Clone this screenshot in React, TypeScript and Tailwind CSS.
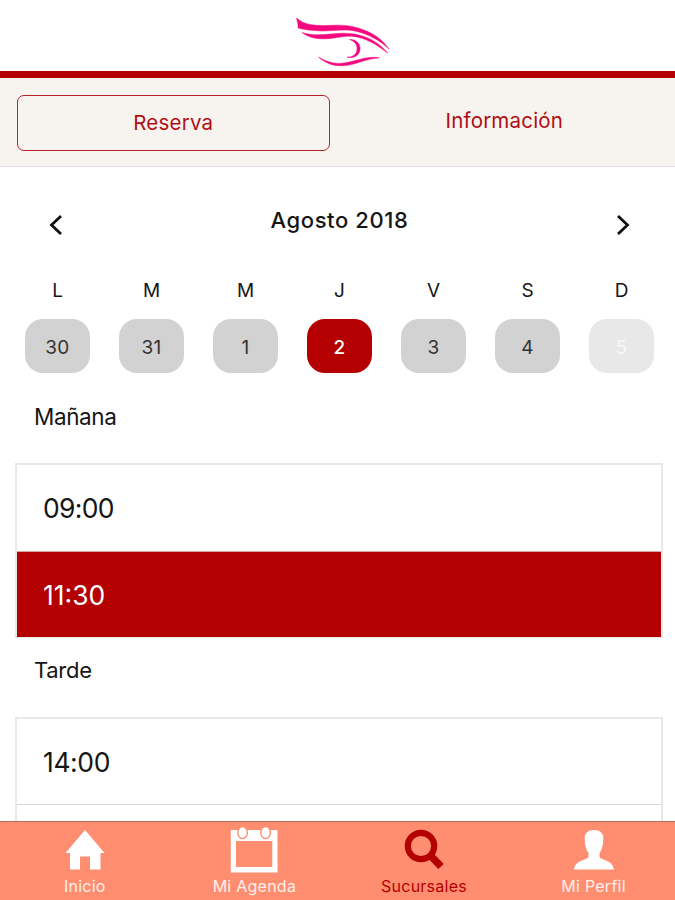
import React from 'react';
import clsx from 'clsx';

const days = [
  { letter: 'L', num: 30 },
  { letter: 'M', num: 31 },
  { letter: 'M', num: 1 },
  { letter: 'J', num: 2, selected: true },
  { letter: 'V', num: 3 },
  { letter: 'S', num: 4 },
  { letter: 'D', num: 5, disabled: true },
];

function Logo() {
  return (
    <svg className="w-[100px] h-[56px]" viewBox="292 14 100 56" fill="#f5087f" stroke="#f5087f" strokeWidth="0.5">
      <path d="M296.5 18C304 25 314 25.5 326 25.5C338 25 347 24.5 358 28C372 32 382 39 389 49C380 40.5 369 34.5 357 31.5C345 28.5 335 31 322 31C311 30.5 303 29.5 298 28C298.5 24 297 21 296.5 18Z" />
      <path d="M302 32.5C311 35.5 320 35 331 34C344 32.5 354 33 364 36.5C374 40 382 46 387.5 53C379 46 369 40 359 37.5C348 34.5 341 37.5 328 38.7C316 39.5 308 37 302 32.5Z" />
      <path d="M349.5 39.5C356 39 361 44 360 50C359 56 353 59 347 57C353 57.5 357 54 357 49C357.5 44.5 354 41 349.5 39.5Z" />
      <path d="M318.5 57C326 61.5 334 64.5 344 63C356 61.5 366 55.5 379.5 57.8C367 58.5 358 64 346 65.5C334 67 325 63 318.5 57Z" />
    </svg>
  );
}

function Chevron({ flip = false }: { flip?: boolean }) {
  return (
    <svg className="w-[14px] h-[22px]" viewBox="0 0 14 22" fill="none" stroke="#111" strokeWidth="2.8">
      <path d={flip ? 'M2 2L11.5 11L2 20' : 'M12 2L2.5 11L12 20'} />
    </svg>
  );
}

function HomeIcon() {
  return (
    <svg className="w-12 h-12" viewBox="0 0 48 48" fill="currentColor">
      <path d="M24 4L43.5 27H39.5V43.5H29V30.5H19V43.5H9V27H4.5Z" />
    </svg>
  );
}

function AgendaIcon() {
  return (
    <svg className="w-12 h-12" viewBox="0 0 48 48" fill="currentColor">
      <path fillRule="evenodd" d="M0.8 4H47.5V46.5H0.8ZM6 15V41H42.3V15Z" />
      <g stroke="#ff8e70" strokeWidth="1.4">
        <ellipse cx="12.6" cy="6.6" rx="4.8" ry="6" />
        <ellipse cx="35.6" cy="6.6" rx="4.8" ry="6" />
      </g>
    </svg>
  );
}

function SearchIcon() {
  return (
    <svg className="w-12 h-12" viewBox="0 0 48 48" fill="none" stroke="currentColor">
      <circle cx="21" cy="20" r="13.2" strokeWidth="6.2" />
      <path d="M29 28L41 40.5" strokeWidth="7.5" />
    </svg>
  );
}

function ProfileIcon() {
  return (
    <svg className="w-12 h-12" viewBox="0 0 48 48" fill="currentColor">
      <path d="M24 4C30 4 33.5 7 33.3 12.5C33.2 19 32 24 29.5 27V31C31 34.5 42.5 33.5 44 43.5H4C5.5 33.5 17 34.5 18.5 31V27C16 24 14.8 19 14.7 12.5C14.5 7 18 4 24 4Z" />
    </svg>
  );
}

const tabs = [
  { label: 'Inicio', icon: HomeIcon },
  { label: 'Mi Agenda', icon: AgendaIcon },
  { label: 'Sucursales', icon: SearchIcon, active: true },
  { label: 'Mi Perfil', icon: ProfileIcon },
];

export default function App() {
  return (
    <div className="w-[675px] h-[900px] flex flex-col overflow-hidden bg-white text-[#161616] font-['Inter',sans-serif]">
      <header className="h-[78px] shrink-0 flex justify-center pt-[14px] pl-[9px] border-b-[7px] border-[#b40000]">
        <Logo />
      </header>

      <div className="h-[89px] shrink-0 flex items-start bg-[#f7f4f0] border-b border-[#dfdfdf] pt-[17px] pl-[17px] text-[20.5px] leading-none text-[#b30d14]">
        <button className="w-[314px] h-14 border-[1.5px] border-[#b8202a] rounded-[7px] tracking-[0.2px]">Reserva</button>
        <button className="w-[347px] h-[53px] pl-1 tracking-[0.2px]">Información</button>
      </div>

      <main className="flex-1 min-h-0 overflow-hidden">
        <div className="h-[112px] flex justify-between pl-[49px] pr-[45px] pt-[47px]">
          <Chevron />
          <h1 className="text-[22px] leading-none font-medium tracking-[0.6px] -mt-[5px]">Agosto 2018</h1>
          <Chevron flip />
        </div>

        <div className="flex justify-between pl-[25px] pr-[21px]">
          {days.map((day, i) => (
            <div key={i} className="w-[65px] flex flex-col items-center">
              <span className="h-10 pt-px text-[19px] leading-[22px]">{day.letter}</span>
              <span
                className={clsx(
                  'w-full h-[54px] pt-1 rounded-[18px] flex items-center justify-center text-[19px] tracking-[0.3px]',
                  day.selected && 'bg-[#b40000] text-white font-medium',
                  day.disabled && 'bg-[#e8e8e8] text-[#f8f8f8]',
                  !day.selected && !day.disabled && 'bg-[#d2d2d2] text-[#333]'
                )}
              >
                {day.num}
              </span>
            </div>
          ))}
        </div>

        <h2 className="h-[90px] pt-[31px] pl-[34px] text-[22.5px] leading-[26px] tracking-[-0.4px]">Mañana</h2>
        <div className="ml-[15px] mr-3 border-2 border-b border-[#e8e8e8] text-[26.5px] tracking-[-0.7px]">
          <div className="h-[86px] pt-0.5 pl-[26px] flex items-center">09:00</div>
          <div className="h-[86px] pt-[3px] pl-[26px] flex items-center bg-[#b40000] text-white tracking-normal border-t border-[#d6a5a5]">11:30</div>
        </div>

        <h2 className="h-[79px] pt-[19px] pl-[34px] text-[22px] leading-[26px] tracking-[-0.3px]">Tarde</h2>
        <div className="ml-[15px] mr-3 border-2 border-[#e8e8e8] text-[26.5px] tracking-[-0.4px]">
          <div className="h-[86px] pt-[3px] pl-[26px] flex items-center border-b border-[#d8d8d8]">14:00</div>
          <div className="h-[86px]" />
        </div>
      </main>

      <nav className="h-[79px] shrink-0 flex bg-[#ff8e70] border-t-[1.5px] border-[#b5705c]">
        {tabs.map(({ label, icon: Icon, active }) => (
          <div
            key={label}
            className={clsx(
              'w-[169.6px] shrink-0 flex flex-col items-center pt-1',
              active ? 'text-[#b40000]' : 'text-white'
            )}
          >
            <Icon />
            <span className={clsx('mt-0.5 text-base leading-5 tracking-[0.25px]', !active && 'text-[#fff0eb]')}>{label}</span>
          </div>
        ))}
      </nav>
    </div>
  );
}
